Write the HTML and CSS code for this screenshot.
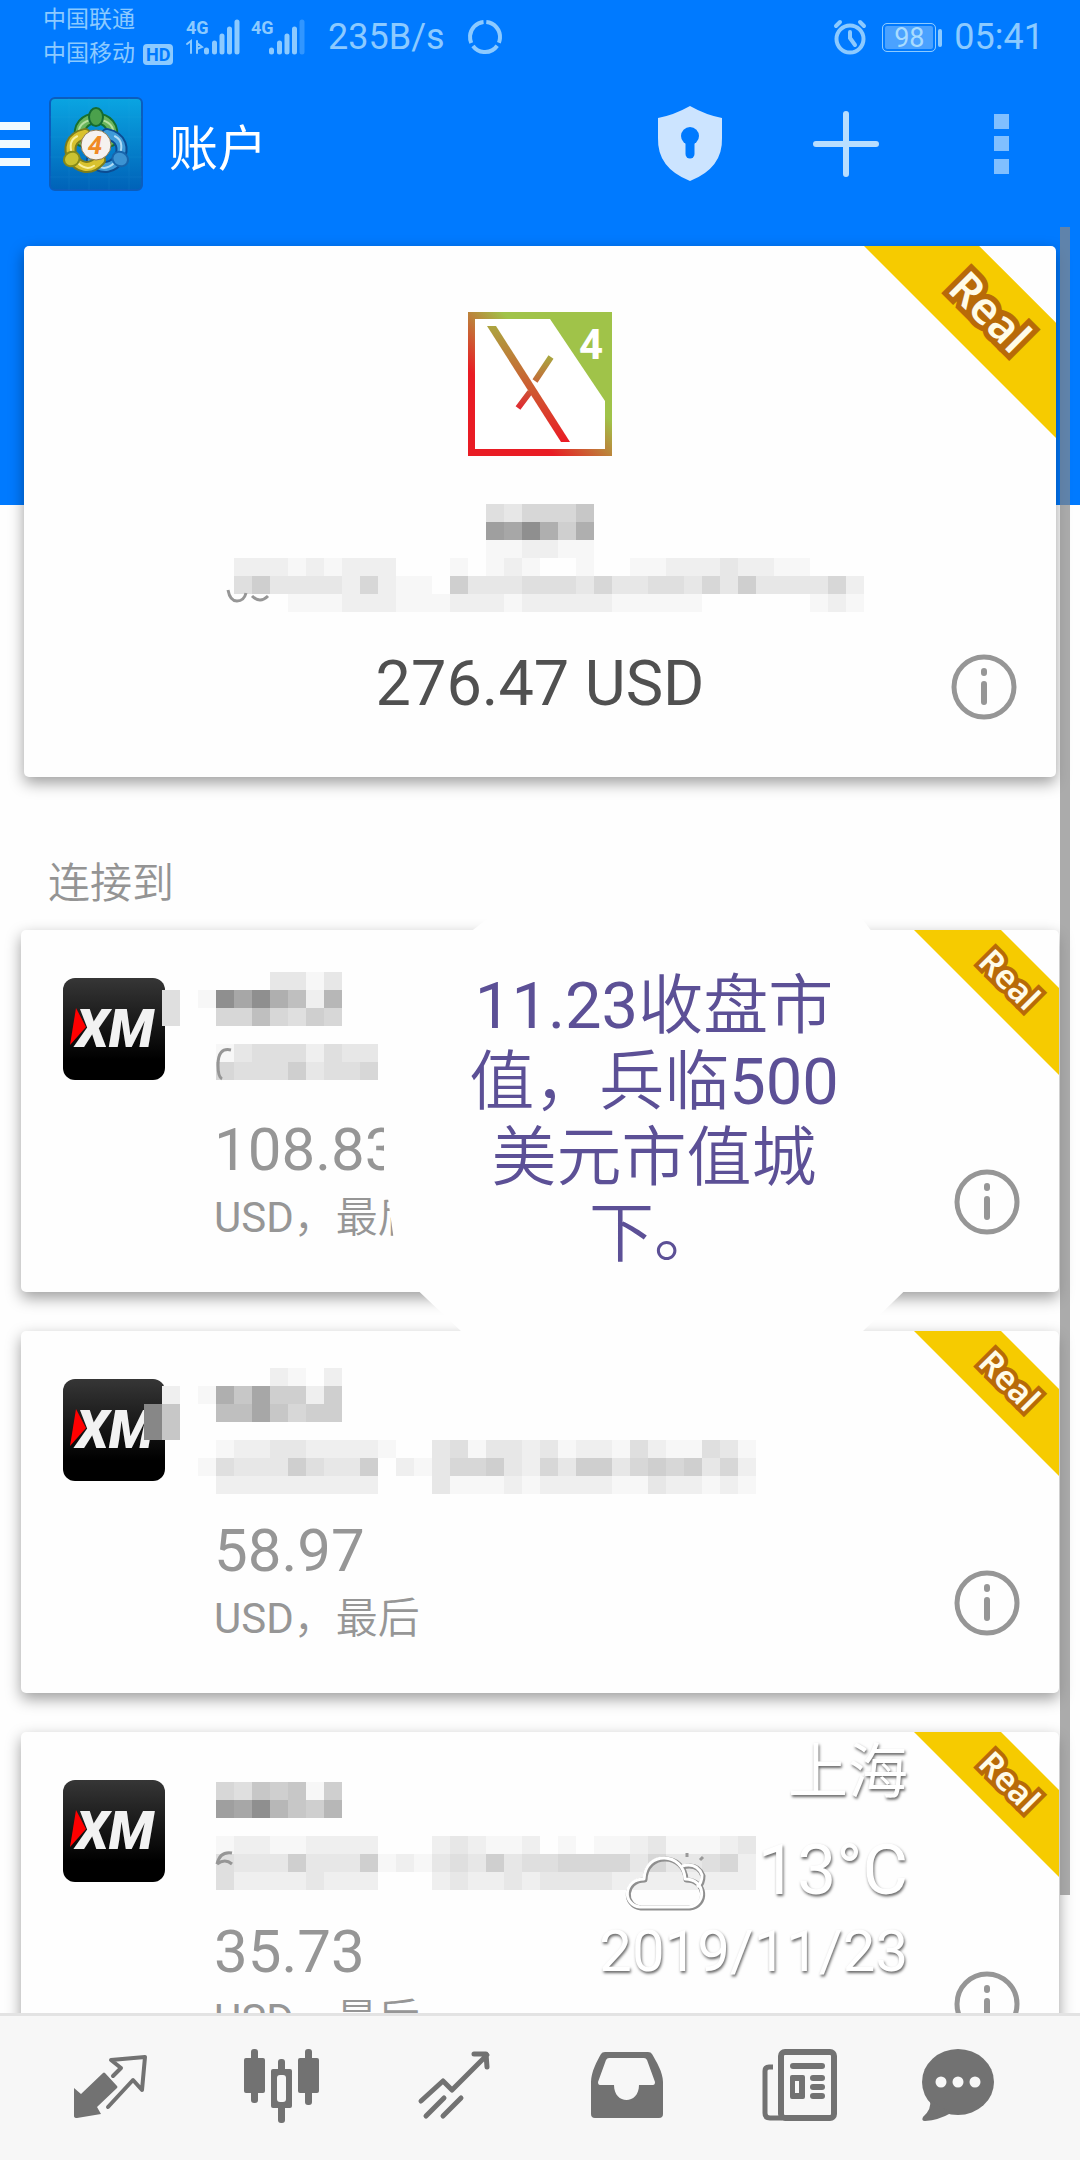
FILE: index.html
```html
<!DOCTYPE html>
<html lang="zh-CN">
<head>
    <meta charset="UTF-8">
    <meta name="viewport" content="width=device-width, initial-scale=1.0">
    <title>账户</title>
    <link rel="stylesheet" href="styles.css">
</head>
<body>
    <!-- общие иконки -->
    <svg class="defs" aria-hidden="true">
        <defs>
            <linearGradient id="xm-bg" x1="0" y1="0" x2="0" y2="1">
                <stop offset="0" stop-color="#363636"/>
                <stop offset="0.8" stop-color="#000"/>
            </linearGradient>
        </defs>
        <symbol id="info" viewBox="0 0 66 66">
            <circle cx="33" cy="33" r="30" fill="none" stroke="#969696" stroke-width="5"/>
            <path d="M33 17v2M33 30v18" stroke="#969696" stroke-width="6" stroke-linecap="round"/>
        </symbol>
        <symbol id="xm" viewBox="0 0 102 102">
            <rect width="102" height="102" rx="12" fill="url(#xm-bg)"/>
            <text x="13" y="69" class="xm-text">XM</text>
            <path d="M13 30l10 19L7 67z" fill="#f00"/>
        </symbol>
    </svg>

    <div class="app">
        <div class="status">
            <div class="carriers">
                <div>中国联通</div>
                <div>中国移动<span class="hd">HD</span></div>
            </div>
            <svg class="signal" viewBox="0 0 54 36">
                <text x="0" y="15">4G</text>
                <path class="traffic" d="M1 25l4-3v12M11 22v12M11 24l5 4-5 2"/>
                <path d="M20.500 31v2M28.500 24v9M36 17v16M43.500 10v23M51 3v30"/>
            </svg>
            <svg class="signal" viewBox="0 0 54 36">
                <text x="0" y="15">4G</text>
                <path d="M20.500 31v2M28.500 24v9M36 17v16M43.500 10v23"/>
                <path d="M51 3v30" opacity="0.35"/>
            </svg>
            <span class="speed">235B/s</span>
            <svg class="loader" viewBox="0 0 36 36">
                <circle cx="18" cy="18" r="15" fill="none" stroke="#8ccaff" stroke-width="4" stroke-dasharray="28 3.400" transform="rotate(-85 18 18)"/>
            </svg>
            <div class="status-right">
                <svg class="alarm" viewBox="0 0 34 36" fill="none" stroke="#8ccaff" stroke-linecap="round">
                    <circle cx="17" cy="20" r="13.500" stroke-width="4"/>
                    <path d="M17 13v6l5 7" stroke-width="4"/>
                    <path d="M3 7l4-4M31 7l-4-4" stroke-width="4"/>
                </svg>
                <div class="battery">98</div>
                <span class="time">05:41</span>
            </div>
        </div>

        <header class="toolbar">
            <button class="menu" aria-label="菜单"><span></span><span></span><span></span></button>
            <svg class="logo" viewBox="0 0 94 94">
                <defs>
                    <linearGradient id="logo-bg" x1="0" y1="0" x2="0" y2="1">
                        <stop offset="0" stop-color="#0aa5e2"/>
                        <stop offset="1" stop-color="#0062b8"/>
                    </linearGradient>
                </defs>
                <rect x="1" y="1" width="92" height="92" rx="5" fill="url(#logo-bg)" stroke="#0b5dbd" stroke-width="2"/>
                <path d="M1 20h92M1 40h92M1 60h92M1 80h92M20 1v92M40 1v92M60 1v92M80 1v92" stroke="#3db4ea" opacity="0.1"/>
                <g stroke-linecap="round">
                    <g>
                        <path d="M32 44C22 14 72 14 62 44" fill="none" stroke="#18702f" stroke-width="12"/>
                        <path d="M32 44C22 14 72 14 62 44" fill="none" stroke="#6ab55c" stroke-width="8"/>
                        <path d="M30 36C28 18 66 18 64 36" fill="none" stroke="#b5e0a0" stroke-width="2"/>
                        <ellipse cx="47" cy="20" rx="7" ry="9" fill="#4ba14c" stroke="#156b32" stroke-width="2"/>
                    </g>
                    <g transform="rotate(120 47 48)">
                        <path d="M32 44C22 14 72 14 62 44" fill="none" stroke="#0c4c92" stroke-width="12"/>
                        <path d="M32 44C22 14 72 14 62 44" fill="none" stroke="#3f9bd8" stroke-width="8"/>
                        <path d="M30 36C28 18 66 18 64 36" fill="none" stroke="#b0dcf5" stroke-width="2"/>
                        <ellipse cx="47" cy="20" rx="7" ry="8" fill="#3c93d2" stroke="#1765ac" stroke-width="2"/>
                    </g>
                    <g transform="rotate(240 47 48)">
                        <path d="M32 44C22 14 72 14 62 44" fill="none" stroke="#7b7c1c" stroke-width="12"/>
                        <path d="M32 44C22 14 72 14 62 44" fill="none" stroke="#d9c22e" stroke-width="8"/>
                        <path d="M30 36C28 18 66 18 64 36" fill="none" stroke="#f8f0a0" stroke-width="2"/>
                        <ellipse cx="47" cy="20" rx="7" ry="8" fill="#cbc332" stroke="#858a1b" stroke-width="2"/>
                    </g>
                </g>
                <circle cx="47" cy="48" r="15" fill="#f5f2ef" stroke="#8f7a50"/>
                <text x="46" y="57" text-anchor="middle" class="logo-text">4</text>
            </svg>
            <h1>账户</h1>
            <div class="actions">
                <button aria-label="安全">
                    <svg viewBox="0 0 80 80">
                        <path d="M40 2Q56 11 72 14V34Q73 64 40 77Q7 64 8 34V14Q24 11 40 2z" fill="#cce4ff"/>
                        <circle cx="40" cy="32" r="9" fill="#007aff"/>
                        <path d="M40 34v16" stroke="#007aff" stroke-width="9" stroke-linecap="round"/>
                    </svg>
                </button>
                <button aria-label="添加">
                    <svg viewBox="0 0 80 80">
                        <path d="M40 10v60M10 40h60" stroke="#b8deff" stroke-width="6" stroke-linecap="round"/>
                    </svg>
                </button>
                <button aria-label="更多">
                    <svg viewBox="0 0 80 80" fill="#80bfff">
                        <path d="M32 10h15v15H32zM32 32h15v15H32zM32 55h15v15H32z"/>
                    </svg>
                </button>
            </div>
        </header>

        <main class="content">
            <section class="card current">
                <div class="ribbon"><span>Real</span></div>
                <svg class="broker" viewBox="0 0 144 144">
                    <defs>
                        <linearGradient id="frame" x1="0" y1="1" x2="1" y2="0">
                            <stop offset="0.3" stop-color="#e91c24"/>
                            <stop offset="0.62" stop-color="#a0c349"/>
                        </linearGradient>
                        <linearGradient id="slash" gradientUnits="userSpaceOnUse" x1="0" y1="14" x2="0" y2="130">
                            <stop offset="0" stop-color="#aca43f"/>
                            <stop offset="1" stop-color="#ea1c25"/>
                        </linearGradient>
                        <linearGradient id="short" gradientUnits="userSpaceOnUse" x1="0" y1="44" x2="0" y2="96">
                            <stop offset="0" stop-color="#a8a83f"/>
                            <stop offset="1" stop-color="#e02a32"/>
                        </linearGradient>
                    </defs>
                    <rect width="144" height="144" fill="url(#frame)"/>
                    <path d="M7 7H82L137 89V137H7z" fill="#fff"/>
                    <path d="M83 45L67 69M62 80L50 96" stroke="url(#short)" stroke-width="6"/>
                    <path d="M19 14h9L102 130h-9z" fill="url(#slash)"/>
                    <text x="123" y="47" text-anchor="middle" class="broker-text">4</text>
                </svg>
                <p class="balance">276.47 USD</p>
                <button class="info" aria-label="信息"><svg><use href="#info"/></svg></button>
            </section>

            <h2>连接到</h2>

            <section class="card account">
                <div class="ribbon"><span>Real</span></div>
                <svg class="xm"><use href="#xm"/></svg>
                <div class="details">
                    <p class="amount">108.83</p>
                    <p class="currency"><span class="latin">USD</span>，最后</p>
                </div>
                <button class="info" aria-label="信息"><svg><use href="#info"/></svg></button>
            </section>

            <section class="card account">
                <div class="ribbon"><span>Real</span></div>
                <svg class="xm"><use href="#xm"/></svg>
                <div class="details">
                    <p class="amount">58.97</p>
                    <p class="currency"><span class="latin">USD</span>，最后</p>
                </div>
                <button class="info" aria-label="信息"><svg><use href="#info"/></svg></button>
            </section>

            <section class="card account">
                <div class="ribbon"><span>Real</span></div>
                <svg class="xm"><use href="#xm"/></svg>
                <div class="details">
                    <p class="amount">35.73</p>
                    <p class="currency"><span class="latin">USD</span>，最后</p>
                </div>
                <button class="info" aria-label="信息"><svg><use href="#info"/></svg></button>
            </section>
        </main>

        <nav class="tabs">
            <button aria-label="行情">
                <svg viewBox="0 0 78 78">
                    <path d="M3 42l7 6 22-21q1-1 2 0l12 13q1 1 0 2L26 61l4 7-24 4q-3 0-3-2z"/>
                    <path d="M42 30l8-8-10-8 34-3-3 33-9-10-25 27" class="line" stroke-width="4"/>
                </svg>
            </button>
            <button aria-label="图表">
                <svg viewBox="0 0 78 78">
                    <rect x="1" y="12" width="21" height="35" rx="2"/>
                    <rect x="8" y="3" width="7" height="54" rx="3"/>
                    <rect x="55" y="12" width="21" height="35" rx="2"/>
                    <rect x="62" y="3" width="7" height="56" rx="3"/>
                    <rect x="35" y="13" width="7" height="64" rx="3"/>
                    <rect x="28" y="23" width="21" height="39" rx="2"/>
                    <rect x="34" y="29" width="9" height="27" rx="3" fill="#f7f7f7"/>
                </svg>
            </button>
            <button aria-label="交易">
                <svg viewBox="0 0 78 78">
                    <path d="M6 55l22-20 9 9L72 9M59 8h12l1 13M11 70l18-18M28 70l18-18" class="line" stroke-width="5"/>
                </svg>
            </button>
            <button aria-label="历史">
                <svg viewBox="0 0 78 78">
                    <path fill-rule="evenodd" d="M4 68V36C4 26 10 15 14 8q1-2 4-2h43q3 0 4 2c4 7 11 18 11 28v32q0 4-4 4H8q-4 0-4-4zM22 12q-2 0-3 2l-8 22q0 3 2 3h14c0 20 25 20 25 0h14q2 0 2-3l-8-22q-1-2-3-2z"/>
                </svg>
            </button>
            <button aria-label="新闻">
                <svg viewBox="0 0 78 78">
                    <rect x="22" y="6" width="53" height="66" rx="4" fill="none" stroke="#727272" stroke-width="6"/>
                    <path d="M14 21h-4q-4 0-4 4v42q0 5 5 5h12" fill="none" stroke="#727272" stroke-width="5"/>
                    <rect x="31" y="17" width="35" height="6" rx="3"/>
                    <path fill-rule="evenodd" d="M33 29h11q2 0 2 2v20q0 2-2 2H33q-2 0-2-2V31q0-2 2-2zM36 35v12h4V35z"/>
                    <rect x="51" y="29" width="15" height="6" rx="3"/>
                    <rect x="51" y="38" width="15" height="6" rx="3"/>
                    <rect x="51" y="47" width="15" height="6" rx="3"/>
                </svg>
            </button>
            <button aria-label="消息">
                <svg viewBox="0 0 78 78">
                    <ellipse cx="39" cy="36" rx="36" ry="33"/>
                    <path d="M11 54q2 9-7 17-2 4 2 4 14-1 26-8z"/>
                    <g fill="#f7f7f7"><circle cx="22" cy="36" r="5.500"/><circle cx="39" cy="36" r="5.500"/><circle cx="56" cy="36" r="5.500"/></g>
                </svg>
            </button>
        </nav>

        <!-- слой поверх экрана: закрашенные данные, заметка, погода -->
        <svg class="censor" id="censor" aria-hidden="true"></svg>
        <div class="note"><span class="latin">11.23</span>收盘市<br>值，兵临<span class="latin">500</span><br>美元市值城<br>下。</div>
        <div class="weather">
            <div class="city">上海</div>
            <div class="temp">
                <svg viewBox="0 0 84 66" fill="none" stroke-linejoin="round">
                    <g stroke="#8f8f8f" stroke-width="5">
                        <path d="M59 18q15-4 20 9 0 8-5 12"/>
                        <path d="M17 59c-18-2-17-28 4-28C22 2 61 4 62 31c21 0 22 26 4 28z"/>
                    </g>
                    <g stroke="#fff" stroke-width="3">
                        <path d="M58 17q15-4 20 9 0 8-5 12"/>
                        <path d="M16 58c-18-2-17-28 4-28C21 1 60 3 61 30c21 0 22 26 4 28z"/>
                    </g>
                    <path d="M63 4v4M79 8l-3 3" stroke="#999" stroke-width="3"/>
                </svg>
                <span>13°C</span>
            </div>
            <div class="date">2019/11/23</div>
        </div>
        <div class="scrollbar"></div>
    </div>
    <script src="script.js"></script>
</body>
</html>
```
FILE: styles.css
```css
* {
    box-sizing: border-box;
}
body {
    margin: 0;
    font-family: Roboto, "Noto Sans CJK SC", sans-serif;
    background: #fefefe;
}
h1, h2, p {
    margin: 0;
    font-weight: 400;
}
button {
    padding: 0;
    border: none;
    background: none;
    cursor: pointer;
}
svg {
    display: block;
}
.latin {
    font-weight: 400;
}
.defs {
    position: absolute;
    width: 0;
    height: 0;
}
.app {
    position: relative;
    display: flex;
    flex-direction: column;
    height: 100vh;
    overflow: hidden;
    background: linear-gradient(#007aff 505px, #fefefe 505px);
}

/* строка состояния */
.status {
    display: flex;
    align-items: center;
    flex: none;
    height: 74px;
    padding: 0 36px 0 43px;
    color: #8ccaff;
}
.carriers {
    width: 143px;
    font-size: 23px;
    line-height: 34px;
    white-space: nowrap;
}
.hd {
    display: inline-block;
    margin-left: 8px;
    padding: 0 3px;
    border-radius: 4px;
    background: #8ccaff;
    color: #007aff;
    font-size: 18px;
    font-weight: 700;
    line-height: 21px;
}
.signal {
    width: 54px;
    height: 36px;
    margin-right: 11px;
    overflow: visible;
}
.signal text {
    font-size: 18px;
    font-weight: 700;
    fill: #8ccaff;
}
.signal path {
    stroke: #8ccaff;
    stroke-width: 5;
    stroke-linecap: round;
}
.signal .traffic {
    fill: none;
    stroke-width: 2;
}
.speed {
    margin-left: 12px;
    font-size: 36px;
}
.loader {
    width: 36px;
    height: 36px;
    margin-left: 22px;
}
.status-right {
    display: flex;
    align-items: center;
    margin-left: auto;
}
.alarm {
    width: 34px;
    height: 36px;
    margin-right: 15px;
}
.battery {
    position: relative;
    width: 54px;
    height: 29px;
    margin-right: 18px;
    border: 1px solid #8ccaff;
    border-radius: 5px;
    background: #4ba2ff;
    box-shadow: inset 0 0 0 2px #007aff;
    font-size: 27px;
    line-height: 28px;
    text-align: center;
    color: #a8dcff;
}
.battery::after {
    content: "";
    position: absolute;
    top: 5px;
    right: -7px;
    width: 4px;
    height: 18px;
    border-radius: 2px;
    background: #8ccaff;
}
.time {
    font-size: 36px;
}

/* верхняя панель */
.toolbar {
    display: flex;
    align-items: center;
    flex: none;
    height: 140px;
    padding-right: 38px;
    color: #fff;
}
.menu {
    display: flex;
    flex-direction: column;
    gap: 10px;
    width: 30px;
    margin-right: 19px;
}
.menu span {
    height: 8px;
    background: #f0faff;
}
.logo {
    width: 94px;
    height: 94px;
}
.logo-text {
    font-size: 26px;
    font-weight: 700;
    font-style: italic;
    fill: #f08a24;
}
.toolbar h1 {
    margin-left: 26px;
    font-size: 49px;
}
.actions {
    display: flex;
    gap: 76px;
    margin-left: auto;
}
.actions svg {
    width: 80px;
    height: 80px;
}

/* карточки */
.content {
    flex: 1;
    min-height: 0;
    padding-top: 32px;
    overflow: hidden;
}
.card {
    position: relative;
    border-radius: 5px;
    background: #fefefe;
    box-shadow: 0 6px 15px rgba(0, 0, 0, 0.38);
}
.current {
    height: 531px;
    margin: 0 24px;
    padding-top: 66px;
}
.broker {
    width: 144px;
    height: 144px;
    margin: 0 auto;
}
.broker-text {
    font-size: 42px;
    font-weight: 700;
    fill: #fff;
}
.balance {
    margin-top: 191px;
    font-size: 63px;
    line-height: 74px;
    text-align: center;
    color: #505050;
}
.info {
    position: absolute;
    right: 39px;
    bottom: 57px;
}
.info svg {
    width: 66px;
    height: 66px;
}
.content h2 {
    margin: 77px 48px 16px;
    font-size: 42px;
    font-weight: 350;
    line-height: 60px;
    color: #949494;
}
.account {
    display: flex;
    height: 362px;
    margin: 0 21px 39px;
    padding: 48px 42px;
}
.xm {
    flex: none;
    width: 102px;
    height: 102px;
}
.xm-text {
    font-size: 53px;
    font-weight: 900;
    font-style: italic;
    fill: #f2f2f2;
}
.details {
    margin-left: 49px;
    padding-top: 137px;
    color: #969696;
}
.amount {
    font-size: 60px;
    line-height: 70px;
}
.currency {
    font-size: 42px;
    font-weight: 350;
    line-height: 66px;
}

/* лента в углу */
.ribbon {
    position: absolute;
    top: 0;
    right: 0;
    width: 145px;
    height: 145px;
    background: #f6cb00;
    clip-path: polygon(0 0, 60% 0, 100% 40%, 100% 100%);
}
.current .ribbon {
    width: 192px;
    height: 192px;
}
.ribbon span {
    position: absolute;
    top: 34%;
    left: 66%;
    color: #fffbe8;
    font-family: "Noto Sans", sans-serif;
    font-size: 33px;
    font-weight: 600;
    line-height: 1;
    -webkit-text-stroke: 8px #b86a08;
    paint-order: stroke fill;
    transform: translate(-50%, -50%) rotate(45deg);
}
.current .ribbon span {
    font-size: 44px;
    -webkit-text-stroke-width: 11px;
}

/* нижние вкладки */
.tabs {
    display: grid;
    grid-template-columns: repeat(5, 172fr) 148fr;
    justify-items: center;
    align-items: start;
    flex: none;
    height: 147px;
    padding: 30px 48px 0 24px;
    border-top: 3px solid #e3e3e3;
    background: #f7f7f7;
}
.tabs svg {
    width: 78px;
    height: 78px;
    fill: #727272;
}
.tabs .line {
    fill: none;
    stroke: #727272;
    stroke-linecap: round;
    stroke-linejoin: round;
}

/* поверх экрана */
.censor {
    position: absolute;
    top: 0;
    left: 0;
    width: 100%;
    height: 100%;
    pointer-events: none;
}
.note {
    position: absolute;
    top: 915px;
    left: 384px;
    width: 540px;
    height: 425px;
    padding-top: 53px;
    background: #fefefe;
    clip-path: polygon(20% 0, 88% 0, 100% 20%, 100% 84%, 87% 100%, 16% 100%, 6% 88%, 2% 78%, 0 60%, 0 20%);
    color: #5c5096;
    font-size: 65px;
    font-weight: 350;
    line-height: 76px;
    text-align: center;
}
.weather {
    position: absolute;
    right: 172px;
    bottom: 176px;
    color: #fff;
    text-align: right;
    text-shadow: 1px 2px 3px rgba(0, 0, 0, 0.6);
}
.city {
    font-size: 60px;
    line-height: 98px;
}
.temp {
    display: flex;
    align-items: center;
    justify-content: flex-end;
    gap: 50px;
    font-size: 70px;
    line-height: 96px;
}
.temp svg {
    width: 84px;
    height: 66px;
    margin-top: 24px;
}
.date {
    font-size: 58px;
    line-height: 66px;
}
.scrollbar {
    position: absolute;
    top: 227px;
    right: 10px;
    width: 10px;
    height: 1668px;
    background: rgba(136, 136, 136, 0.7);
}
```
FILE: script.js
```js
const CELL = 18;

// col и row в клетках, цифра (hex) - насколько клетка темная
const strips = [
    { col: 27, row: 28, cells: ["435557", "cbea6a", "112211"] },
    { col: 13, row: 31, cells: [
        "22212122200010121001001122232211000",
        "46333325211063334443533443536333352",
        "00011122211122212222211111000000121"
    ] },
    { col: 9, row: 54, cells: [
        "0000003313",
        "401ebea829",
        "4005585465",
        "",
        "000134442433",
        "000544463445"
    ] },
    { col: 8, row: 76, cells: [
        "00000002102",
        "0201a7b6626",
        "f70088b7566",
        "f7",
        "0000122332222100341332312214211431",
        "0001433364336021355632536635656352",
        "0000222222222000311121222211322121"
    ] },
    { col: 12, row: 99, cells: [
        "5476716",
        "cbe9769",
        "",
        "122112222000232112010112311123",
        "433363336121343634455553533452",
        "422223222000232232333322222222"
    ] }
];

const NS = "http://www.w3.org/2000/svg";
const censor = document.getElementById("censor");

function addPath(d, stroke, width) {
    const path = document.createElementNS(NS, "path");
    path.setAttribute("d", d);
    path.setAttribute("fill", "none");
    path.setAttribute("stroke", stroke);
    path.setAttribute("stroke-width", width);
    censor.appendChild(path);
}

strips.forEach(strip => {
    strip.cells.forEach((line, y) => {
        [...line].forEach((char, x) => {
            const level = parseInt(char, 16);
            if (!level) return;
            const grey = 255 - level * 8;
            const rect = document.createElementNS(NS, "rect");
            rect.setAttribute("x", (strip.col + x) * CELL);
            rect.setAttribute("y", (strip.row + y) * CELL);
            rect.setAttribute("width", CELL);
            rect.setAttribute("height", CELL);
            rect.setAttribute("fill", `rgb(${grey}, ${grey}, ${grey})`);
            censor.appendChild(rect);
        });
    });
});

// края цифр, которые видны из-под закраски
addPath("M228 590q2 11 9 11t9-8M252 596q8 8 16 0", "#969696", 3);
addPath("M231 1050q-13-3-13 15 0 12 4 14", "#969696", 3);
addPath("M232 1853q-12-2-15 11M217 1864q8-6 15 0", "#969696", 3);
```
